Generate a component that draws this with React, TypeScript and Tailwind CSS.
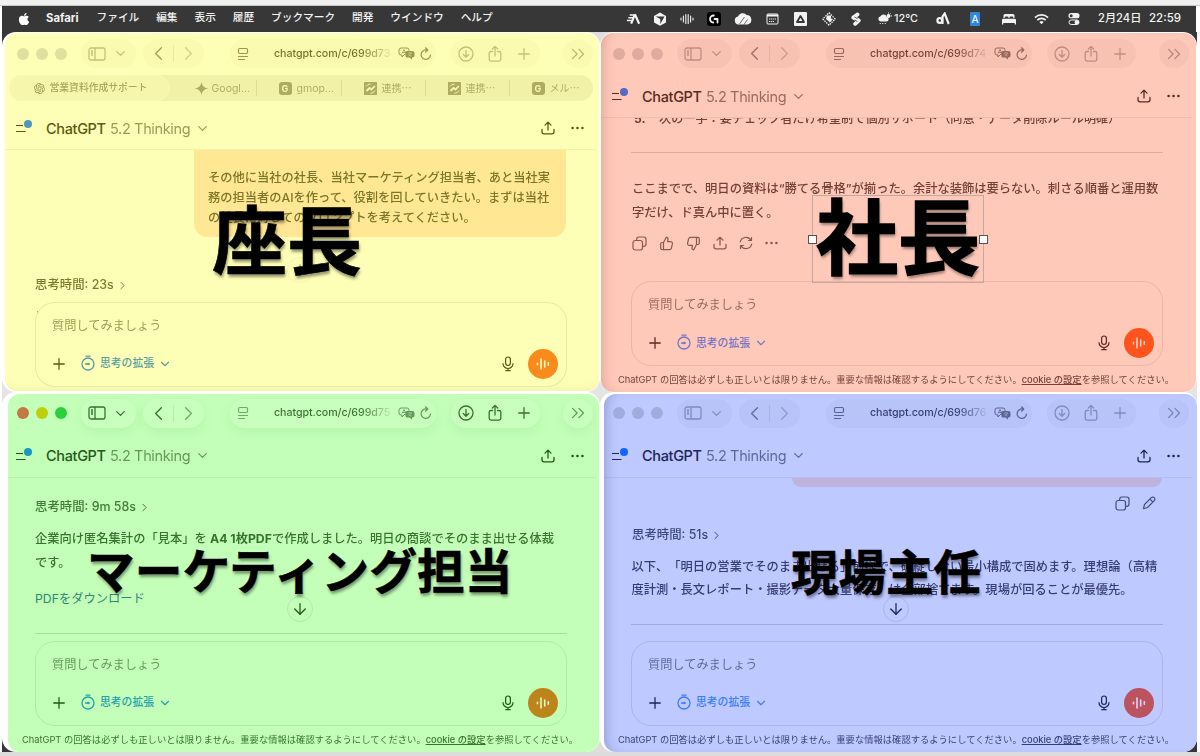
import type { ReactNode } from 'react';
import {
  ArrowDown,
  ChevronDown,
  ChevronLeft,
  ChevronRight,
  ChevronsRight,
  Plus,
} from 'lucide-react';
import { RiOpenaiFill } from 'react-icons/ri';

interface Theme {
  frame: string;
  tint: string;
  inner: string;
  pill: string;
  lights: string[];
  dot: string;
  accent: string;
  voice: string;
  active?: boolean;
}

const yellow: Theme = {
  frame: 'pl-[3px] pr-[1px] pt-px pb-px',
  tint: 'bg-[#feffb6] text-[#5c5a10] shadow-[inset_0_-8px_10px_-8px_rgba(90,90,0,0.12)]',
  inner: '-ml-[5px] -mt-px',
  pill: 'bg-[#fafab0]',
  lights: ['bg-[#e0df9e]', 'bg-[#e0df9e]', 'bg-[#e0df9e]'],
  dot: 'bg-[#4f97bd]',
  accent: 'text-[#5b9fa0]',
  voice: 'bg-[#fb8a1c] text-[#ffffc0]',
};

const red: Theme = {
  frame: 'pl-[1px] pr-[1px] pt-px',
  tint: 'bg-[#ffc9ba] text-[#5a2a20] shadow-[inset_10px_0_12px_-8px_rgba(120,60,50,0.25)]',
  inner: '-ml-[5px] -mt-px',
  pill: 'bg-[#f8c2b3]',
  lights: ['bg-[#dfab9e]', 'bg-[#dfab9e]', 'bg-[#dfab9e]'],
  dot: 'bg-[#5568c4]',
  accent: 'text-[#7575c6]',
  voice: 'bg-[#fd531c] text-[#ffd3c4]',
};

const green: Theme = {
  frame: 'pl-[6px] pr-[1px] pt-[2px]',
  tint: 'bg-[#c3ffb8] text-[#1f5a1a]',
  inner: '-ml-[8px] -mt-[2px]',
  pill: 'bg-[#c8ffbe] shadow-[0_4px_12px_rgba(40,120,40,0.08)]',
  lights: ['bg-[#c07a42]', 'bg-[#c0cf0d]', 'bg-[#2bd13a]'],
  dot: 'bg-[#1c95c0]',
  accent: 'text-[#27a2ae]',
  voice: 'bg-[#bd841c] text-[#d8ffc0]',
  active: true,
};

const blue: Theme = {
  frame: 'pl-[4px] pt-[2px]',
  tint: 'bg-[#bec9ff] text-[#1e2456] shadow-[inset_10px_0_12px_-8px_rgba(50,60,120,0.3)]',
  inner: '-ml-[8px] -mt-[2px]',
  pill: 'bg-[#b8c3f8]',
  lights: ['bg-[#a0abde]', 'bg-[#a0abde]', 'bg-[#a0abde]'],
  dot: 'bg-[#1463ff]',
  accent: 'text-[#3b7df8]',
  voice: 'bg-[#bc5460] text-[#d9d6ff]',
};

/* ---------- icons ---------- */

function Icon({ className, box = 24, sw = 1.6, children }: { className?: string; box?: number; sw?: number; children: ReactNode }) {
  return (
    <svg
      viewBox={`0 0 ${box} ${box}`}
      className={className}
      fill="none"
      stroke="currentColor"
      strokeWidth={sw}
      strokeLinecap="round"
      strokeLinejoin="round"
    >
      {children}
    </svg>
  );
}

function SidebarIcon() {
  return (
    <svg viewBox="0 0 18 14" className="h-[14px] w-[18px]" fill="none" stroke="currentColor" strokeWidth="1.3">
      <rect x="1" y="1" width="16" height="12" rx="2" />
      <path d="M7 1v12M3 4h2M3 6h2M3 8h2" />
    </svg>
  );
}

function ReaderIcon() {
  return (
    <svg viewBox="0 0 12 14" className="h-[14px] w-[12px]" fill="none" stroke="currentColor" strokeWidth="1.2">
      <rect x="1.5" y="1.5" width="9" height="5" rx="1.2" />
      <path d="M1 9.5h10M1 12.5h7" />
    </svg>
  );
}

function TranslateIcon() {
  return (
    <svg viewBox="0 0 17 13" className="h-[13px] w-[17px]">
      <path d="M3 1h6a2 2 0 0 1 2 2v4H7L4 10V8H3a2 2 0 0 1-2-2V3a2 2 0 0 1 2-2z" fill="none" stroke="currentColor" />
      <path d="M4 6.5 6 2.5 8 6.500M4.700 5.500h2.600" fill="none" stroke="currentColor" strokeWidth="0.8" />
      <path d="M9 4h5.500a2 2 0 0 1 2 2v2.500a2 2 0 0 1-2 2H14v2l-2.500-2H9a1.500 1.500 0 0 1-1.500-1.500V5.500A1.500 1.500 0 0 1 9 4z" fill="currentColor" />
      <path d="M10 6h4M12 5v1M13.500 6c-.5 1.500-1.500 2.500-3 3M10.500 6.800c.5 1 1.500 2 3 2.200" fill="none" stroke="#fff" strokeOpacity="0.5" strokeWidth="0.7" />
    </svg>
  );
}

function ReloadIcon() {
  return (
    <Icon className="size-[14px]" box={14} sw={1.2}>
      <path d="M11.500 8A4.700 4.700 0 1 1 7.500 3M6.500 .8 8.800 3 6.500 5.200" />
    </Icon>
  );
}

function DownloadIcon() {
  return (
    <Icon className="size-[16px]" box={16} sw={1.3}>
      <circle cx="8" cy="8" r="7" />
      <path d="M8 4.500v6.500M5.300 8.500 8 11.200l2.700-2.700" />
    </Icon>
  );
}

function ShareBoxIcon() {
  return (
    <Icon className="size-[18px]" box={18} sw={1.3}>
      <path d="M6.500 6.500H5A1.800 1.800 0 0 0 3.200 8.300v6A1.800 1.800 0 0 0 5 16.100h8a1.800 1.800 0 0 0 1.800-1.800v-6A1.800 1.800 0 0 0 13 6.500h-1.500M9 11V1.500M6.300 4 9 1.400 11.700 4" />
    </Icon>
  );
}

function UploadIcon({ className = 'size-[14px]' }: { className?: string }) {
  return (
    <Icon className={className} box={14} sw={1.3}>
      <path d="M1 8.500v2.300a2 2 0 0 0 2 2h8a2 2 0 0 0 2-2V8.500M7 9V1.200M4 4.100l3-3 3 3" />
    </Icon>
  );
}

function DotsIcon({ className = 'h-[4px] w-[13px]' }: { className?: string }) {
  return (
    <svg viewBox="0 0 13 4" className={className} fill="currentColor">
      <circle cx="1.600" cy="2" r="1.300" />
      <circle cx="6.500" cy="2" r="1.300" />
      <circle cx="11.400" cy="2" r="1.300" />
    </svg>
  );
}

function CopyIcon() {
  return (
    <Icon className="size-[15px]" box={15} sw={1.2}>
      <rect x="1" y="4.500" width="9.500" height="9.500" rx="2.200" />
      <path d="M4.700 4.300V3.200A2.200 2.200 0 0 1 6.900 1h4.900A2.200 2.200 0 0 1 14 3.200v4.900a2.200 2.200 0 0 1-2.200 2.200h-1" />
    </Icon>
  );
}

function ThumbIcon({ down }: { down?: boolean }) {
  return (
    <Icon className={down ? 'size-[15px] rotate-180' : 'size-[15px]'} box={15} sw={1.2}>
      <path d="M4.500 6.500 7.300 1.200c1.200 0 1.900.9 1.700 2L8.600 5.600h3.100c1.200 0 2 1 1.700 2.200l-1 4.300c-.2 1-1 1.600-2 1.600H4.500zM4.500 6.500H3.200c-.9 0-1.500.6-1.500 1.500v4.200c0 .9.600 1.500 1.500 1.500h1.300" />
    </Icon>
  );
}

function RefreshIcon() {
  return (
    <Icon className="size-[14px]" box={14} sw={1.2}>
      <path d="M1.300 6A5.800 5.800 0 0 1 12 4.300M12.500 1.500v3H9.600M12.700 8A5.800 5.800 0 0 1 2 9.700M1.500 12.500v-3h2.900" />
    </Icon>
  );
}

function PencilIcon() {
  return (
    <Icon className="size-[14px]" box={14} sw={1.2}>
      <path d="M9.300 1.700a2.100 2.100 0 0 1 3 3L5.500 11.500 1.500 12.700l1-4.200zM8 3.200l2.800 2.800" />
    </Icon>
  );
}

function TimerIcon() {
  return (
    <svg viewBox="0 0 14 16" className="-mt-[2px] h-[16px] w-[14px]" fill="none" stroke="currentColor" strokeWidth="1.3">
      <circle cx="7" cy="9" r="6" />
      <path d="M5 1.200h4" strokeLinecap="round" />
      <path d="M4.500 9h3" strokeLinecap="round" />
      <circle cx="7.500" cy="9" r="1.300" fill="currentColor" stroke="none" />
    </svg>
  );
}

function MicIcon() {
  return (
    <svg viewBox="0 0 12 16" className="h-[16px] w-[12px]" fill="none" stroke="currentColor" strokeWidth="1.2" strokeLinecap="round">
      <rect x="3.600" y="1" width="4.800" height="8.500" rx="2.400" />
      <path d="M1 7.500a5 5 0 0 0 10 0M6 12.500v2M3.800 14.700h4.400" />
    </svg>
  );
}

function VoiceIcon() {
  return (
    <Icon className="size-[14px]" box={14} sw={1.6}>
      <path d="M1.500 6.200v1.600M5 2v10M8.700 4v6M12.300 5.700v2.600" />
    </Icon>
  );
}

/* ---------- menu bar ---------- */

const menus = ['ファイル', '編集', '表示', '履歴', 'ブックマーク', '開発', 'ウインドウ', 'ヘルプ'];

function Slot({ className, children }: { className: string; children: ReactNode }) {
  return <span className={`flex shrink-0 items-center justify-center ${className}`}>{children}</span>;
}

function MenuBar() {
  return (
    <header className="ml-[2px] flex h-[26px] w-[1194px] items-center bg-[#373737] pb-[1px] text-[10.700px] font-medium whitespace-nowrap text-[#f2f2f2]">
      <svg viewBox="0 0 384 512" className="ml-[16px] h-[14px] w-[12px]" fill="#fff">
        <path d="M318.700 268.700c-.2-36.700 16.400-64.400 50-84.800-18.800-26.900-47.200-41.700-84.700-44.600-35.500-2.800-74.300 20.700-88.500 20.700-15 0-49.400-19.700-76.400-19.700C63.300 141.200 4 184.800 4 273.500q0 39.300 14.400 81.200c12.800 36.700 59 126.700 107.200 125.200 25.200-.6 43-17.900 75.800-17.900 31.800 0 48.300 17.900 76.400 17.900 48.600-.7 90.400-82.500 102.600-119.300-65.200-30.700-61.700-90-61.700-91.900zm-56.600-164.200c27.300-32.400 24.800-61.900 24-72.500-24.100 1.400-52 16.400-67.900 34.900-17.500 19.800-27.800 44.300-25.600 71.900 26.100 2 49.900-11.400 69.500-34.300z" />
      </svg>
      <span className="ml-[16px] w-[34px] text-[11.300px] font-bold">Safari</span>
      <nav className="ml-[16.500px] flex gap-[16.900px]">
        {menus.map((m) => (
          <span key={m}>{m}</span>
        ))}
      </nav>
      <div className="ml-auto flex w-[576px] items-center">
        <Slot className="w-[27px]">
          <svg viewBox="0 0 16 12" className="h-[12px] w-[15px]" stroke="currentColor" fill="none">
            <path d="M4 1.700h5M2.500 4.700h5.500M1 7.700h5" strokeWidth="1.600" />
            <path d="M9.500 1 14 11M9.500 1 5.500 11" strokeWidth="2.300" />
          </svg>
        </Slot>
        <Slot className="w-[26px]">
          <svg viewBox="0 0 14 14" className="size-[14px]">
            <path d="M7 .5 13 4v6.500L7 13.800 1 10.500V4z" fill="#f2f2f2" />
            <path d="M2.500 4.500h9L7.300 12V7z" fill="#373737" />
          </svg>
        </Slot>
        <Slot className="w-[27px]">
          <Icon className="size-[14px]" box={14} sw={1.100}>
            <path d="M1 6v2M3.400 4v6M5.800 2.500v9M8.200 2.500v9M10.600 4v6M13 6v2" />
          </Icon>
        </Slot>
        <Slot className="w-[28px]">
          <span className="flex size-[14px] items-center justify-center rounded-[3px] bg-black">
            <Icon className="size-[10px]" box={10} sw={1.800}>
              <path d="M4.800 1.500A3.500 3.500 0 1 0 4.300 8.500M5.500 5h3v3.500" />
            </Icon>
          </span>
        </Slot>
        <Slot className="w-[30px]">
          <svg viewBox="0 0 18 13" className="h-[13px] w-[18px]">
            <path d="M4.500 12.500a4 4 0 0 1-.5-7.900A5 5 0 0 1 12.500 3a4.800 4.800 0 0 1 1 9.500z" fill="#f2f2f2" />
            <path d="M5.500 12 10.500 5M10 12.500l3.500-5" stroke="#373737" strokeWidth="0.7" fill="none" />
          </svg>
        </Slot>
        <Slot className="w-[28px]">
          <svg viewBox="0 0 13 12" className="h-[12px] w-[13px]" fill="none" stroke="currentColor">
            <rect x="1" y="1" width="11" height="10" rx="1" />
            <path d="M1 2.500h11" strokeWidth="2" />
            <path d="M3 6h7M3 8.500h5" strokeDasharray="1.300 0.700" />
          </svg>
        </Slot>
        <Slot className="w-[28px]">
          <svg viewBox="0 0 13 14" className="h-[14px] w-[13px]">
            <rect width="13" height="14" rx="1" fill="#f2f2f2" />
            <path d="M6.500 4 10 10H3z" fill="none" stroke="#373737" strokeWidth="1.800" strokeLinejoin="round" />
          </svg>
        </Slot>
        <Slot className="w-[29px]">
          <svg viewBox="0 0 14 14" className="size-[14px]">
            <path d="M7 .8 13.200 7 7 13.200.8 7z" fill="none" stroke="currentColor" strokeDasharray="1.500 1" strokeWidth="1.300" />
            <path d="M5 3.500h4v3l2 .5-3 3.500-4-3.500z" fill="currentColor" />
          </svg>
        </Slot>
        <Slot className="w-[26px]">
          <svg viewBox="0 0 10 14" className="h-[14px] w-[10px]" fill="currentColor">
            <path d="M6 .5a2 2 0 0 1 2 3.200L6 5.300l2.700 1.400a2 2 0 0 1 .3 3.300L5.500 13.200a1.900 1.900 0 0 1-2.700-2.700L4.500 9 1.300 7.200A2 2 0 0 1 1 4z" />
            <path d="M3.500 5 6.500 6.700M3.500 8 6.500 9.500" stroke="#373737" strokeWidth="0.8" />
          </svg>
        </Slot>
        <Slot className="w-[57px] text-[10.800px]">
          <svg viewBox="0 0 15 14" className="h-[14px] w-[15px]" fill="currentColor">
            <path d="M3.500 9.500a2.700 2.700 0 0 1 0-5.300A3.500 3.500 0 0 1 9.800 5a2.300 2.300 0 0 1 0 4.500z" />
            <circle cx="11.500" cy="4" r="2" />
            <path d="M11.500 .5v1M14 4h1M13.500 1.500l-.6.600M3.500 11l-.5 1M6 11l-.5 1M8.500 11l-.5 1" stroke="currentColor" />
          </svg>
          <span className="ml-[2px] w-[24px] pt-[1px]">12°C</span>
        </Slot>
        <Slot className="w-[34px]">
          <svg viewBox="0 0 14 13" className="h-[13px] w-[14px]" fill="none" stroke="currentColor" strokeWidth="2.200">
            <circle cx="3.800" cy="8.500" r="2.400" />
            <path d="M6.500 12V4.500L8.700 1.500l4 10.500" />
          </svg>
        </Slot>
        <Slot className="w-[30px]">
          <span className="flex h-[14px] w-[10px] items-center justify-center rounded-[1px] bg-[#2f86dc] text-[10px] leading-none">A</span>
        </Slot>
        <Slot className="w-[38px]">
          <svg viewBox="0 0 16 12" className="h-[12px] w-[16px]" fill="currentColor">
            <path d="M2.500 5V2.500A1.500 1.500 0 0 1 4 1h8a1.500 1.500 0 0 1 1.500 1.500V5h-1.200V4.500a1 1 0 0 0-1-1H9.500a1 1 0 0 0-1 1V5h-1V4.500a1 1 0 0 0-1-1H4.700a1 1 0 0 0-1 1V5zM1 7a1.200 1.200 0 0 1 1.200-1.200h11.600A1.200 1.200 0 0 1 15 7v4.500h-1.300V10H2.300v1.500H1z" />
          </svg>
        </Slot>
        <Slot className="w-[26px]">
          <svg viewBox="0 0 16 12" className="h-[12px] w-[15px]" fill="none" stroke="currentColor" strokeWidth="1.700">
            <path d="M1 4.500a10 10 0 0 1 14 0M3.500 7.200a6.400 6.400 0 0 1 9 0" />
            <path d="M8 11.500 5.700 9.200a3.300 3.300 0 0 1 4.600 0z" fill="currentColor" stroke="none" />
          </svg>
        </Slot>
        <Slot className="w-[40px]">
          <svg viewBox="0 0 12 12" className="size-[12px]">
            <rect x="0.500" y="0" width="11" height="5.300" rx="2.600" fill="#f2f2f2" />
            <circle cx="3.200" cy="2.650" r="1.500" fill="#373737" />
            <rect x="1" y="7" width="10" height="4.500" rx="2.200" fill="none" stroke="#f2f2f2" />
            <circle cx="8.800" cy="9.250" r="2.200" fill="#f2f2f2" />
          </svg>
        </Slot>
        <span className="flex items-baseline">
          <span className="ml-[4px] w-[51px] text-[11.200px]">2月24日</span>
          <span className="text-[11.500px]">22:59</span>
        </span>
      </div>
    </header>
  );
}

/* ---------- window chrome ---------- */

function Toolbar({ theme, url }: { theme: Theme; url: string }) {
  const strong = theme.active ? 'opacity-85' : 'opacity-35';
  const pill = `flex h-[29px] items-center rounded-full ${theme.pill}`;
  return (
    <div className="flex h-[43px] shrink-0 items-center">
      <div className="ml-[17px] flex w-[64px] gap-[7px]">
        {theme.lights.map((c, i) => (
          <span key={i} className={`size-[12px] rounded-full ${c}`} />
        ))}
      </div>
      <div className={`${pill} w-[55px] pl-[7px]`}>
        <span className={`flex items-center gap-[7px] ${strong}`}>
          <SidebarIcon />
          <ChevronDown className="size-[15px]" strokeWidth={2} />
        </span>
      </div>
      <div className={`${pill} ml-[7px] w-[61px] justify-between px-[4px]`}>
        <ChevronLeft className={`size-[23px] ${theme.active ? 'opacity-85' : 'opacity-55'}`} strokeWidth={1.400} />
        <span className="h-[17px] w-px bg-current opacity-10" />
        <ChevronRight className={`size-[23px] ${theme.active ? 'opacity-50' : 'opacity-25'}`} strokeWidth={1.400} />
      </div>
      <div className={`${pill} ml-[26px] w-[206px] pl-[7px]`}>
        <span className={theme.active ? 'opacity-50' : 'opacity-60'}>
          <ReaderIcon />
        </span>
        <span className="ml-[25px] w-[120px] bg-gradient-to-r from-current from-72% to-transparent bg-clip-text pt-[1px] text-[10.700px] font-medium tracking-[-0.080px] whitespace-nowrap opacity-85">
          <span className="text-transparent">{url}</span>
        </span>
        <span className="ml-[4px] flex items-center gap-[3.500px] opacity-60">
          <TranslateIcon />
          <ReloadIcon />
        </span>
      </div>
      <div className={`${pill} ml-[15px] w-[89px] pl-[7px]`}>
        <span className={`flex items-center ${strong}`}>
          <DownloadIcon />
          <span className="ml-[12px]">
            <ShareBoxIcon />
          </span>
          <Plus className="ml-[11px] size-[18px]" strokeWidth={1.700} />
        </span>
      </div>
      <div className={`${pill} ml-[23px] w-[30px] justify-center`}>
        <ChevronsRight className={`size-[22px] ${theme.active ? 'opacity-60' : 'opacity-40'}`} strokeWidth={1.400} />
      </div>
    </div>
  );
}

function GBadge() {
  return (
    <span className="flex size-[13px] shrink-0 items-center justify-center rounded-[3px] bg-current">
      <span className="text-[9px] leading-none font-bold text-[#feffb6]">G</span>
    </span>
  );
}

function LinkBadge() {
  return (
    <svg viewBox="0 0 13 13" className="size-[13px] shrink-0">
      <rect x="0" y="0" width="13" height="13" fill="currentColor" />
      <path d="M2.500 9 5.500 6 7.500 7.500 10.800 4" fill="none" stroke="#feffb6" strokeWidth="1.800" />
      <path d="M2 4.500A5 5 0 0 1 6.500 2M11 8.500A5 5 0 0 1 6.500 11.300" fill="none" stroke="#feffb6" strokeWidth="1" />
    </svg>
  );
}

function TabBar() {
  return (
    <div className="ml-[8.500px] flex h-[26px] w-[584px] items-center rounded-full bg-[#f1f1a7] text-[10.500px] whitespace-nowrap">
      <div className="flex h-[26px] w-[161px] items-center rounded-full border border-[#fafab8] bg-[#f6f6ac] pl-[23px]">
        <RiOpenaiFill className="size-[13px] opacity-60" />
        <span className="ml-[4px] pt-[1px] text-[9.800px] font-medium opacity-50">営業資料作成サポート</span>
      </div>
      <div className="flex h-[16px] w-[87px] items-center border-r border-[#c9c884] pl-[25px] opacity-45">
        <svg viewBox="0 0 12 12" className="size-[13px]" fill="currentColor">
          <path d="M6 0c.5 3.500 2.500 5.500 6 6-3.500.5-5.500 2.500-6 6-.5-3.500-2.500-5.500-6-6 3.500-.5 5.500-2.500 6-6z" />
        </svg>
        <span className="ml-[4px] pt-[1px]">Googl...</span>
      </div>
      <div className="flex h-[16px] w-[85px] items-center border-r border-[#c9c884] pl-[22px] opacity-45">
        <GBadge />
        <span className="ml-[5px] pt-[1px]">gmop...</span>
      </div>
      <div className="flex h-[16px] w-[84px] items-center border-r border-[#c9c884] pl-[22px] opacity-45">
        <LinkBadge />
        <span className="ml-[5px] pt-[1px] text-[10px]">連携⋯</span>
      </div>
      <div className="flex h-[16px] w-[84px] items-center border-r border-[#c9c884] pl-[22px] opacity-45">
        <LinkBadge />
        <span className="ml-[5px] pt-[1px] text-[10px]">連携⋯</span>
      </div>
      <div className="flex h-[16px] items-center pl-[22px] opacity-45">
        <GBadge />
        <span className="ml-[5px] pt-[1px] text-[10px]">メル⋯</span>
      </div>
    </div>
  );
}

function ChatHeader({ theme }: { theme: Theme }) {
  return (
    <div className="flex h-[43px] shrink-0 items-center border-b border-current/7 pl-[16px] text-[14.500px] tracking-[-0.350px]">
      <span className="relative h-[12px] w-[17px]">
        <svg viewBox="0 0 17 12" className="h-[12px] w-[17px]" stroke="currentColor" strokeWidth="1.200">
          <path d="M0 3.500h7M0 9.500h9.500" />
        </svg>
        <span className={`absolute -top-[2px] left-[8px] size-[8px] rounded-full ${theme.dot}`} />
      </span>
      <span className="ml-[13px] w-[64px] pt-[1px] font-medium">ChatGPT</span>
      <span className="w-[84.500px] pt-[1px] opacity-60">5.2 Thinking</span>
      <ChevronDown className="size-[15px] opacity-60" strokeWidth={1.900} />
      <span className="ml-[331px]">
        <UploadIcon />
      </span>
      <span className="ml-[16.500px] flex">
        <DotsIcon />
      </span>
    </div>
  );
}

function Composer({ theme, footer }: { theme: Theme; footer?: boolean }) {
  return (
    <div className="relative shrink-0">
      <div className={`ml-[34.500px] flex h-[85px] w-[532px] flex-col rounded-[20px] border border-current/12 px-[16.500px] pt-[13px] ${footer ? '' : 'bg-[#feffb6]'}`}>
        <span className="text-[12.200px] leading-[20px] opacity-60">質問してみましょう</span>
        <div className="-mr-[8.500px] mt-[13px] flex h-[30px] items-center">
          <Plus className="-ml-[2.500px] size-[18px]" strokeWidth={1.700} />
          <span className={`ml-[13px] flex items-center text-[10.800px] ${theme.accent}`}>
            <TimerIcon />
            <span className="ml-[5.500px] pt-[2px] font-medium">思考の拡張</span>
            <ChevronDown className="ml-[4px] size-[14px]" strokeWidth={2} />
          </span>
          <span className="ml-auto">
            <MicIcon />
          </span>
          <span className={`ml-[14px] flex size-[30px] items-center justify-center rounded-full ${theme.voice}`}>
            <VoiceIcon />
          </span>
        </div>
      </div>
      {footer ? (
        <p className="flex h-[25.500px] justify-center pt-[7px] pl-[4px] text-[9.300px] leading-[14px] whitespace-nowrap opacity-85">
          ChatGPT の回答は必ずしも正しいとは限りません。重要な情報は確認するようにしてください。
          <span className="font-medium underline">cookie の設定</span>を参照してください。
        </p>
      ) : (
        <div className="h-[5px]" />
      )}
    </div>
  );
}

function ThinkTime({ time, className }: { time: string; className: string }) {
  return (
    <div className={`flex h-[20px] items-center pt-[1px] text-[12.400px] font-medium opacity-80 ${className}`}>
      <span>思考時間: {time}</span>
      <ChevronRight className="ml-[2px] size-[13px]" strokeWidth={1.800} />
    </div>
  );
}

function ScrollDown({ className }: { className: string }) {
  return (
    <span className={`absolute left-[287px] flex size-[26px] items-center justify-center rounded-full border border-current/12 ${className}`}>
      <ArrowDown className="size-[18px]" strokeWidth={1.700} />
    </span>
  );
}

function Window({ theme, url, tabs, footer, children }: { theme: Theme; url: string; tabs?: boolean; footer?: boolean; children: ReactNode }) {
  return (
    <div className={`overflow-hidden rounded-[14px] bg-white ${theme.frame}`}>
      <section className={`h-full overflow-hidden rounded-[12px] ${theme.tint}`}>
        <div className={`flex h-[359.500px] w-[596px] flex-col ${theme.inner}`}>
          <Toolbar theme={theme} url={url} />
          {tabs && (
            <div className="h-[32px]">
              <TabBar />
            </div>
          )}
          <ChatHeader theme={theme} />
          <div className="relative min-h-0 flex-1">{children}</div>
          <Composer theme={theme} footer={footer} />
        </div>
      </section>
    </div>
  );
}

const label = 'absolute font-bold leading-none whitespace-nowrap text-black [text-shadow:1px_3px_3px_rgba(0,0,0,0.4)] [-webkit-text-stroke:0.6px_black]';

export default function App() {
  return (
    <div className="h-[756px] w-[1200px] overflow-hidden bg-white font-['Inter','Noto_Sans_CJK_JP',sans-serif] [text-spacing-trim:space-all]">
      <div className="h-[6px] border-b border-[#c4cbc6] bg-[#f0f0f0]" />
      <MenuBar />
      <main className="relative ml-[2px] grid h-[720px] w-[1195px] grid-cols-[598px_597px] grid-rows-[359.500px_360.500px] bg-[linear-gradient(transparent_0_20px,#e4e4e4_20px_700px,transparent_700px),linear-gradient(90deg,#373737_0_20px,#dedede_20px_1175px,#373737_1175px)]">
        <Window theme={yellow} url="chatgpt.com/c/699d73" tabs>
          <div className="ml-[194px] h-[86.500px] w-[372px] rounded-b-[14px] bg-[#ffe793] pt-[18px] pl-[14px] text-[12.250px] leading-[20px] font-medium whitespace-nowrap">
            <p className="opacity-80">
              その他に当社の社長、当社マーケティング担当者、あと当社実
              <br />
              務の担当者のAIを作って、役割を回していきたい。まずは当社
              <br />
              の社長に対してのプロンプトを考えてください。
            </p>
          </div>
          <ThinkTime time="23s" className="mt-[38px] ml-[35px]" />
          <ScrollDown className="top-[107px] opacity-50" />
          <span className="absolute top-[161px] left-[37px] h-[6px] w-px bg-current opacity-50" />
        </Window>

        <Window theme={red} url="chatgpt.com/c/699d74" footer>
          <div className="h-[7px] overflow-hidden pl-[38px] opacity-85">
            <p className="-mt-[9px] flex text-[12.150px] leading-[20px] font-medium whitespace-nowrap">
              <span className="w-[25px] font-bold">5.</span>
              次の一手：要チェック者だけ希望制で個別サポート（同意・データ削除ルール明確）
            </p>
          </div>
          <div className="mt-[27px] ml-[35px] h-px w-[532px] bg-current/18" />
          <p className="mt-[24px] ml-[36px] text-[12.280px] leading-[23.500px] font-medium whitespace-nowrap opacity-85">
            ここまでで、明日の資料は“勝てる骨格”が揃った。余計な装飾は要らない。刺さる順番と運用数
            <br />
            字だけ、ド真ん中に置く。
          </p>
          <div className="mt-[11px] ml-[36px] flex h-[16px] items-center gap-[12px] opacity-70">
            <CopyIcon />
            <ThumbIcon />
            <ThumbIcon down />
            <UploadIcon />
            <RefreshIcon />
            <DotsIcon />
          </div>
        </Window>

        <Window theme={green} url="chatgpt.com/c/699d75" footer>
          <ThinkTime time="9m 58s" className="mt-[19px] ml-[35px]" />
          <p className="mt-[10.500px] ml-[35px] text-[12.280px] leading-[23.500px] font-medium whitespace-nowrap opacity-85">
            企業向け匿名集計の「見本」を <b>A4 1枚PDF</b>で作成しました。明日の商談でそのまま出せる体裁
            <br />
            です。
          </p>
          <p className="mt-[14.500px] ml-[35px] text-[12.250px] leading-[20px] text-[#2c8a74]">PDFをダウンロード</p>
          <div className="mt-[24px] ml-[35px] h-px w-[532px] bg-current/18" />
          <ScrollDown className="top-[118px]" />
        </Window>

        <Window theme={blue} url="chatgpt.com/c/699d76" footer>
          <div className="ml-[196px] h-[9px] w-[370px] rounded-b-[14px] bg-[#bfb2dc]" />
          <div className="mt-[9px] ml-[519px] flex gap-[12px] opacity-75">
            <CopyIcon />
            <PencilIcon />
          </div>
          <ThinkTime time="51s" className="mt-[14px] ml-[36px]" />
          <p className="mt-[10px] ml-[35.500px] text-[12.280px] leading-[23.500px] font-medium whitespace-nowrap opacity-85">
            以下、「明日の営業でそのまま出せる」前提で、破綻しない最小構成で固めます。理想論（高精
            <br />
            度計測・長文レポート・撮影データ大量保存）は全部捨てます。現場が回ることが最優先。
          </p>
          <div className="mt-[22px] ml-[35px] h-px w-[532px] bg-current/18" />
          <ScrollDown className="top-[118px]" />
        </Window>

        {/* captions laid over the four windows */}
        <span className={`${label} top-[172px] left-[210px] text-[75px]`}>座長</span>
        <div className="absolute top-[163px] left-[810px] h-[88px] w-[172px] border border-[#a99a94]/70">
          <span className={`${label} top-[2px] left-[3px] text-[82px] [-webkit-text-stroke:1.500px_black]`}>社長</span>
          <span className="absolute top-[39px] -left-[5px] size-[9px] border border-[#555] bg-white" />
          <span className="absolute top-[39px] -right-[5px] size-[9px] border border-[#555] bg-white" />
        </div>
        <span className={`${label} top-[517px] left-[85px] text-[47.700px]`}>マーケティング担当</span>
        <span className={`${label} top-[517px] left-[789px] text-[47.500px]`}>現場主任</span>
      </main>
      <div className="h-[4px] bg-[#dcdcdc]" />
    </div>
  );
}
